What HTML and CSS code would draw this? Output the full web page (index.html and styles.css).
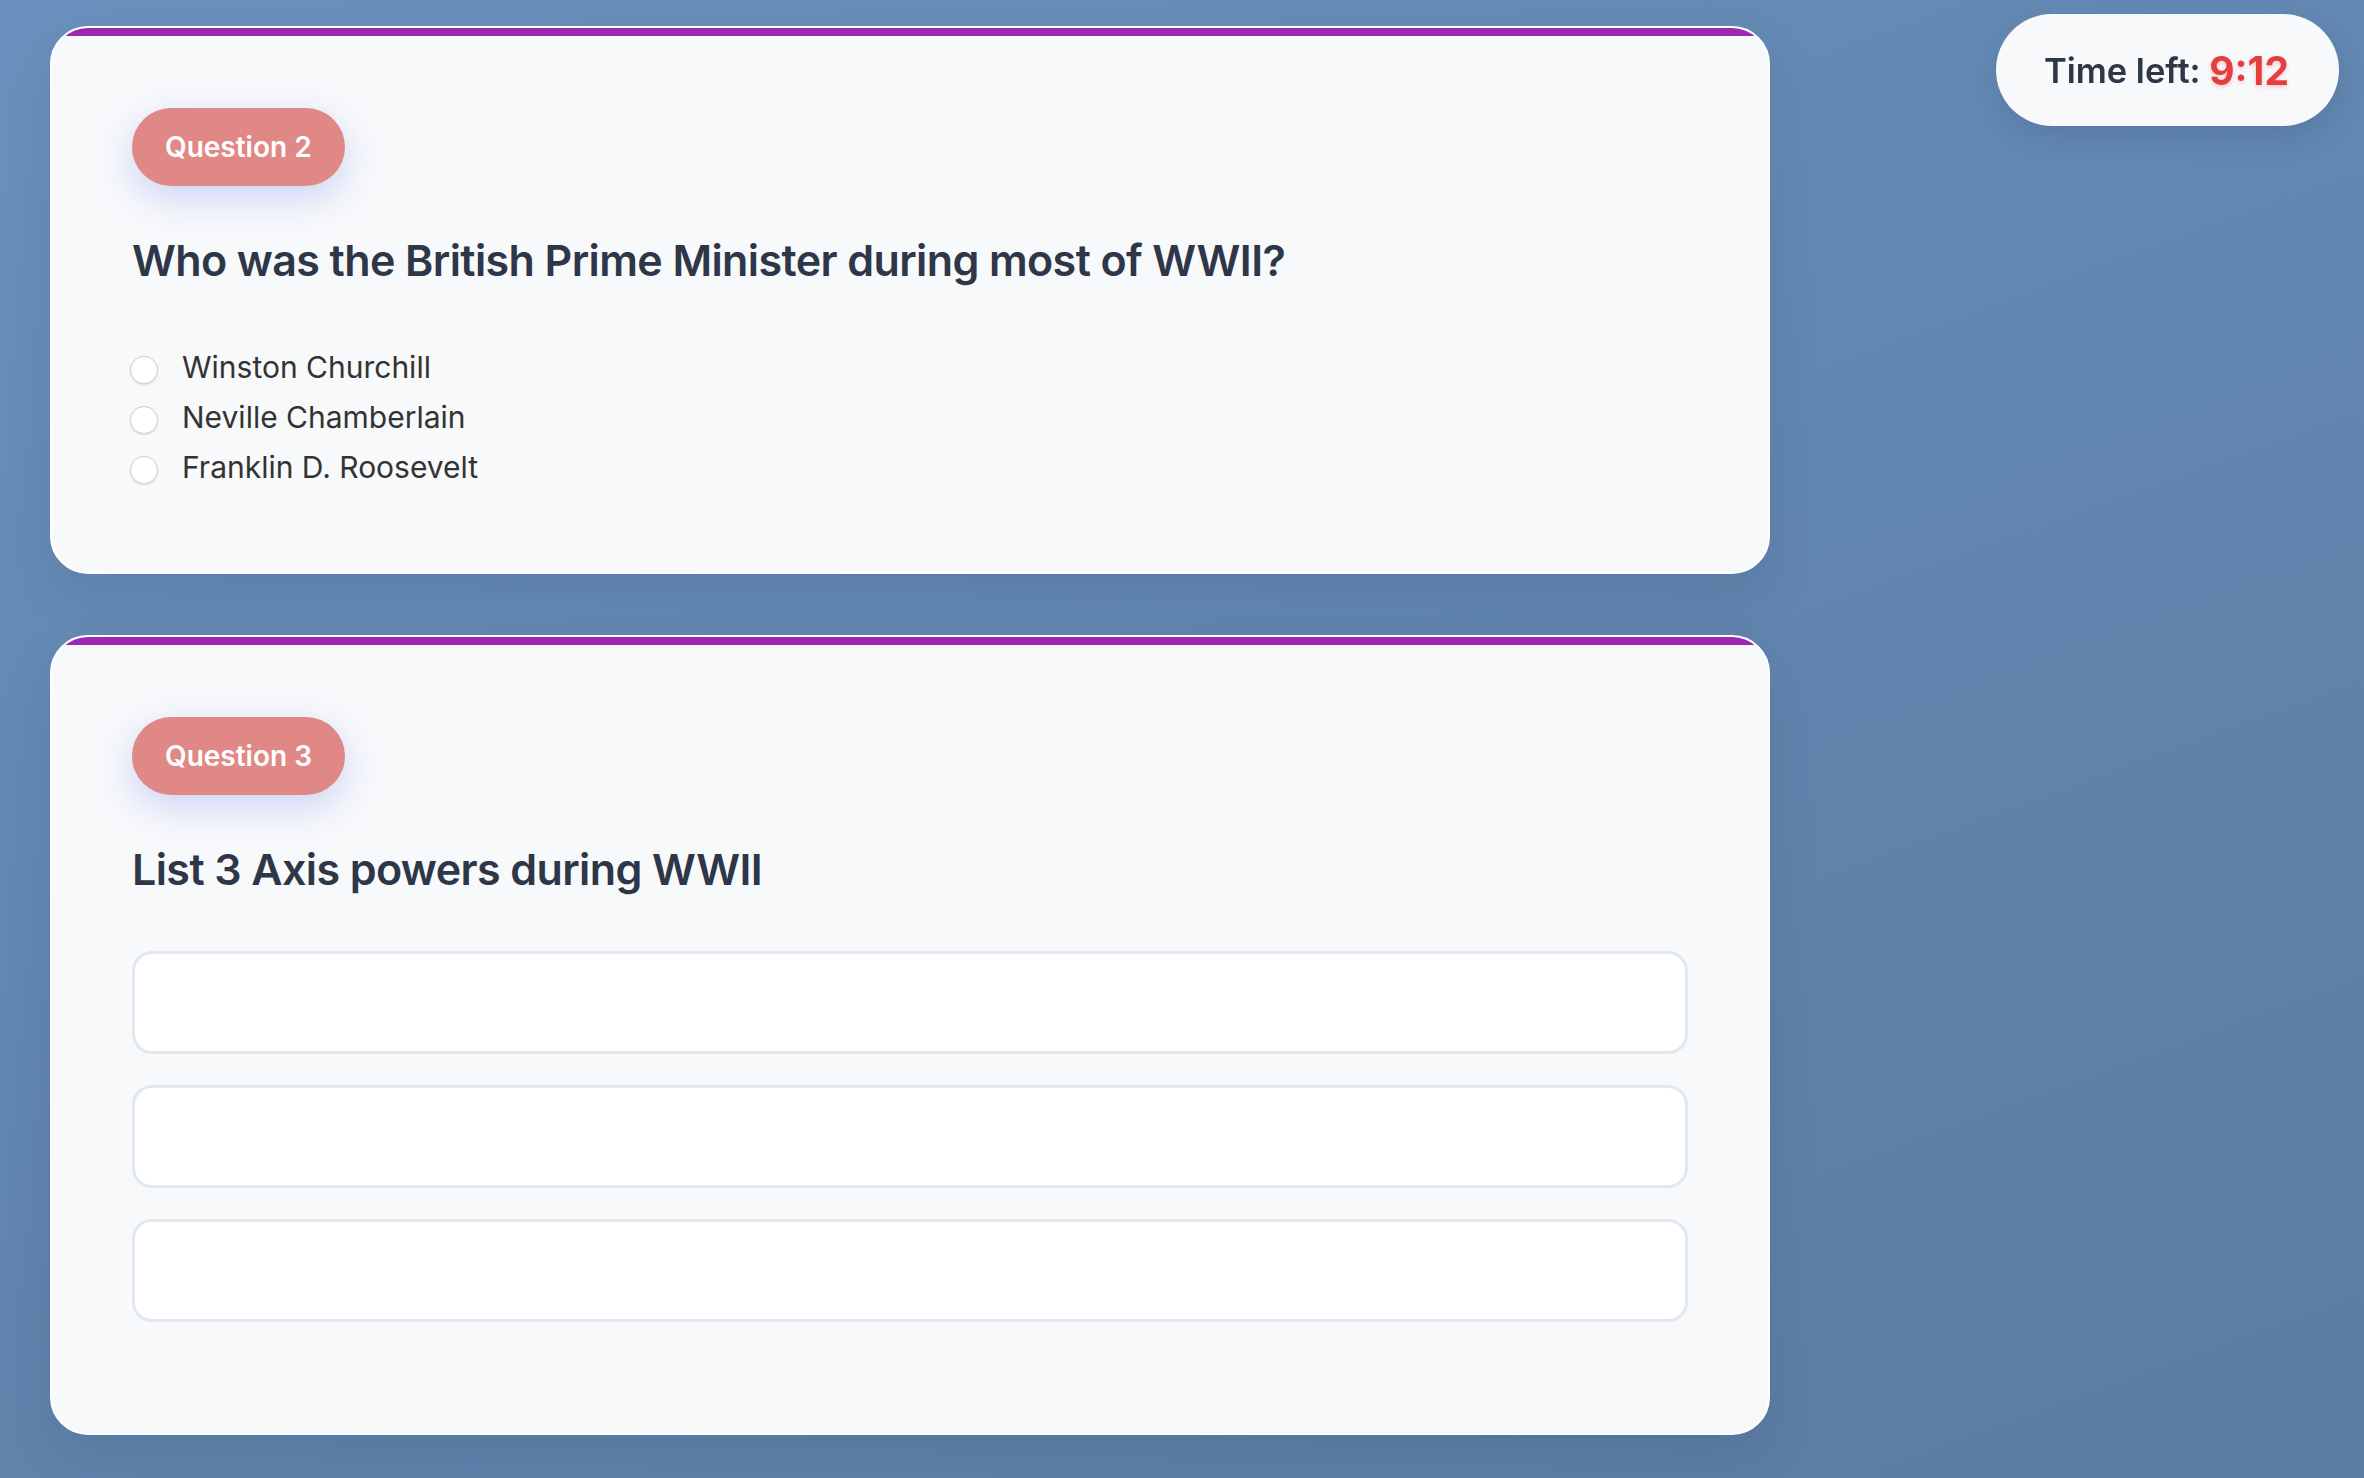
FILE: index.html
```html
<!DOCTYPE html>
<html lang="en">
<head>
<meta charset="utf-8">
<title>Quiz</title>
<link rel="stylesheet" href="styles.css">
</head>
<body>
<div class="timer">Time left: <span class="timer-value">9:12</span></div>
<main class="quiz">
  <section class="card">
    <div class="card-bar"></div>
    <div class="card-body">
      <span class="badge">Question 2</span>
      <h2 class="question">Who was the British Prime Minister during most of WWII?</h2>
      <div class="options">
        <label class="option"><input type="radio" name="q2" class="radio"><span>Winston Churchill</span></label>
        <label class="option"><input type="radio" name="q2" class="radio"><span>Neville Chamberlain</span></label>
        <label class="option"><input type="radio" name="q2" class="radio"><span>Franklin D. Roosevelt</span></label>
      </div>
    </div>
  </section>
  <section class="card">
    <div class="card-bar"></div>
    <div class="card-body">
      <span class="badge">Question 3</span>
      <h2 class="question">List 3 Axis powers during WWII</h2>
      <div class="inputs">
        <input type="text" class="text-input">
        <input type="text" class="text-input">
        <input type="text" class="text-input">
      </div>
    </div>
  </section>
</main>
</body>
</html>
```
FILE: styles.css
```css
* { box-sizing: border-box; }

html {
  min-height: 100%;
  background: linear-gradient(160deg, #6a91bd 0%, #6287b0 45%, #5b7ba3 100%);
}

body {
  margin: 0;
  min-height: 100vh;
  font-family: Inter, "Noto Sans", "Liberation Sans", sans-serif;
  color: #2d3748;
}

.quiz {
  display: flex;
  flex-direction: column;
  gap: 61px;
  width: 1770px;
  padding: 26px 0 40px 50px;
}

.card {
  width: 1720px;
  background: #f8f9fb;
  border: 2px solid #ffffff;
  border-radius: 38px;
  overflow: hidden;
  box-shadow: 0 20px 50px rgba(30, 50, 90, 0.12);
}

.card-bar {
  height: 8px;
  background: #9c27b0;
}

.card-body {
  padding: 72px 80px 80px 80px;
}

.badge {
  display: inline-block;
  padding: 24px 33px;
  line-height: 30px;
  font-size: 28px;
  font-weight: 600;
  color: #ffffff;
  background: #e08886;
  border-radius: 39px;
  box-shadow: 0 12px 36px rgba(102, 126, 234, 0.3);
}

.question {
  margin: 48px 0 55px 0;
  font-size: 43px;
  line-height: 53px;
  font-weight: 600;
  color: #2d3748;
  letter-spacing: -0.6px;
}

.options {
  display: flex;
  flex-direction: column;
}

.option {
  display: flex;
  align-items: center;
  height: 50px;
  font-size: 30px;
  line-height: 50px;
  color: #333333;
}

.radio {
  appearance: none;
  -webkit-appearance: none;
  width: 28px;
  height: 28px;
  margin: 6px 24px 0 -2px;
  border: 1.5px solid #cfcfcf;
  border-radius: 50%;
  background: #ffffff;
  box-shadow: 0 1px 2px rgba(0, 0, 0, 0.12);
  flex: none;
}

.inputs {
  display: flex;
  flex-direction: column;
  gap: 31px;
  padding-bottom: 31px;
}

.text-input {
  display: block;
  width: 100%;
  height: 103px;
  border: 3px solid #e2e8f0;
  border-radius: 20px;
  background: #ffffff;
  font-family: inherit;
  font-size: 30px;
  padding: 0 30px;
  outline: none;
}

.timer {
  position: fixed;
  top: 14px;
  right: 25px;
  height: 112px;
  padding: 0 50px 0 48px;
  display: flex;
  align-items: center;
  background: #f7f9fb;
  border-radius: 56px;
  font-size: 34.5px;
  font-weight: 600;
  color: #2d3748;
  white-space: pre;
  box-shadow: 0 10px 30px rgba(20, 40, 80, 0.15);
}

.timer-value {
  font-size: 39px;
  font-weight: 700;
  color: #e53e3e;
  text-shadow: 0 2px 4px rgba(229, 62, 62, 0.25);
}
```
